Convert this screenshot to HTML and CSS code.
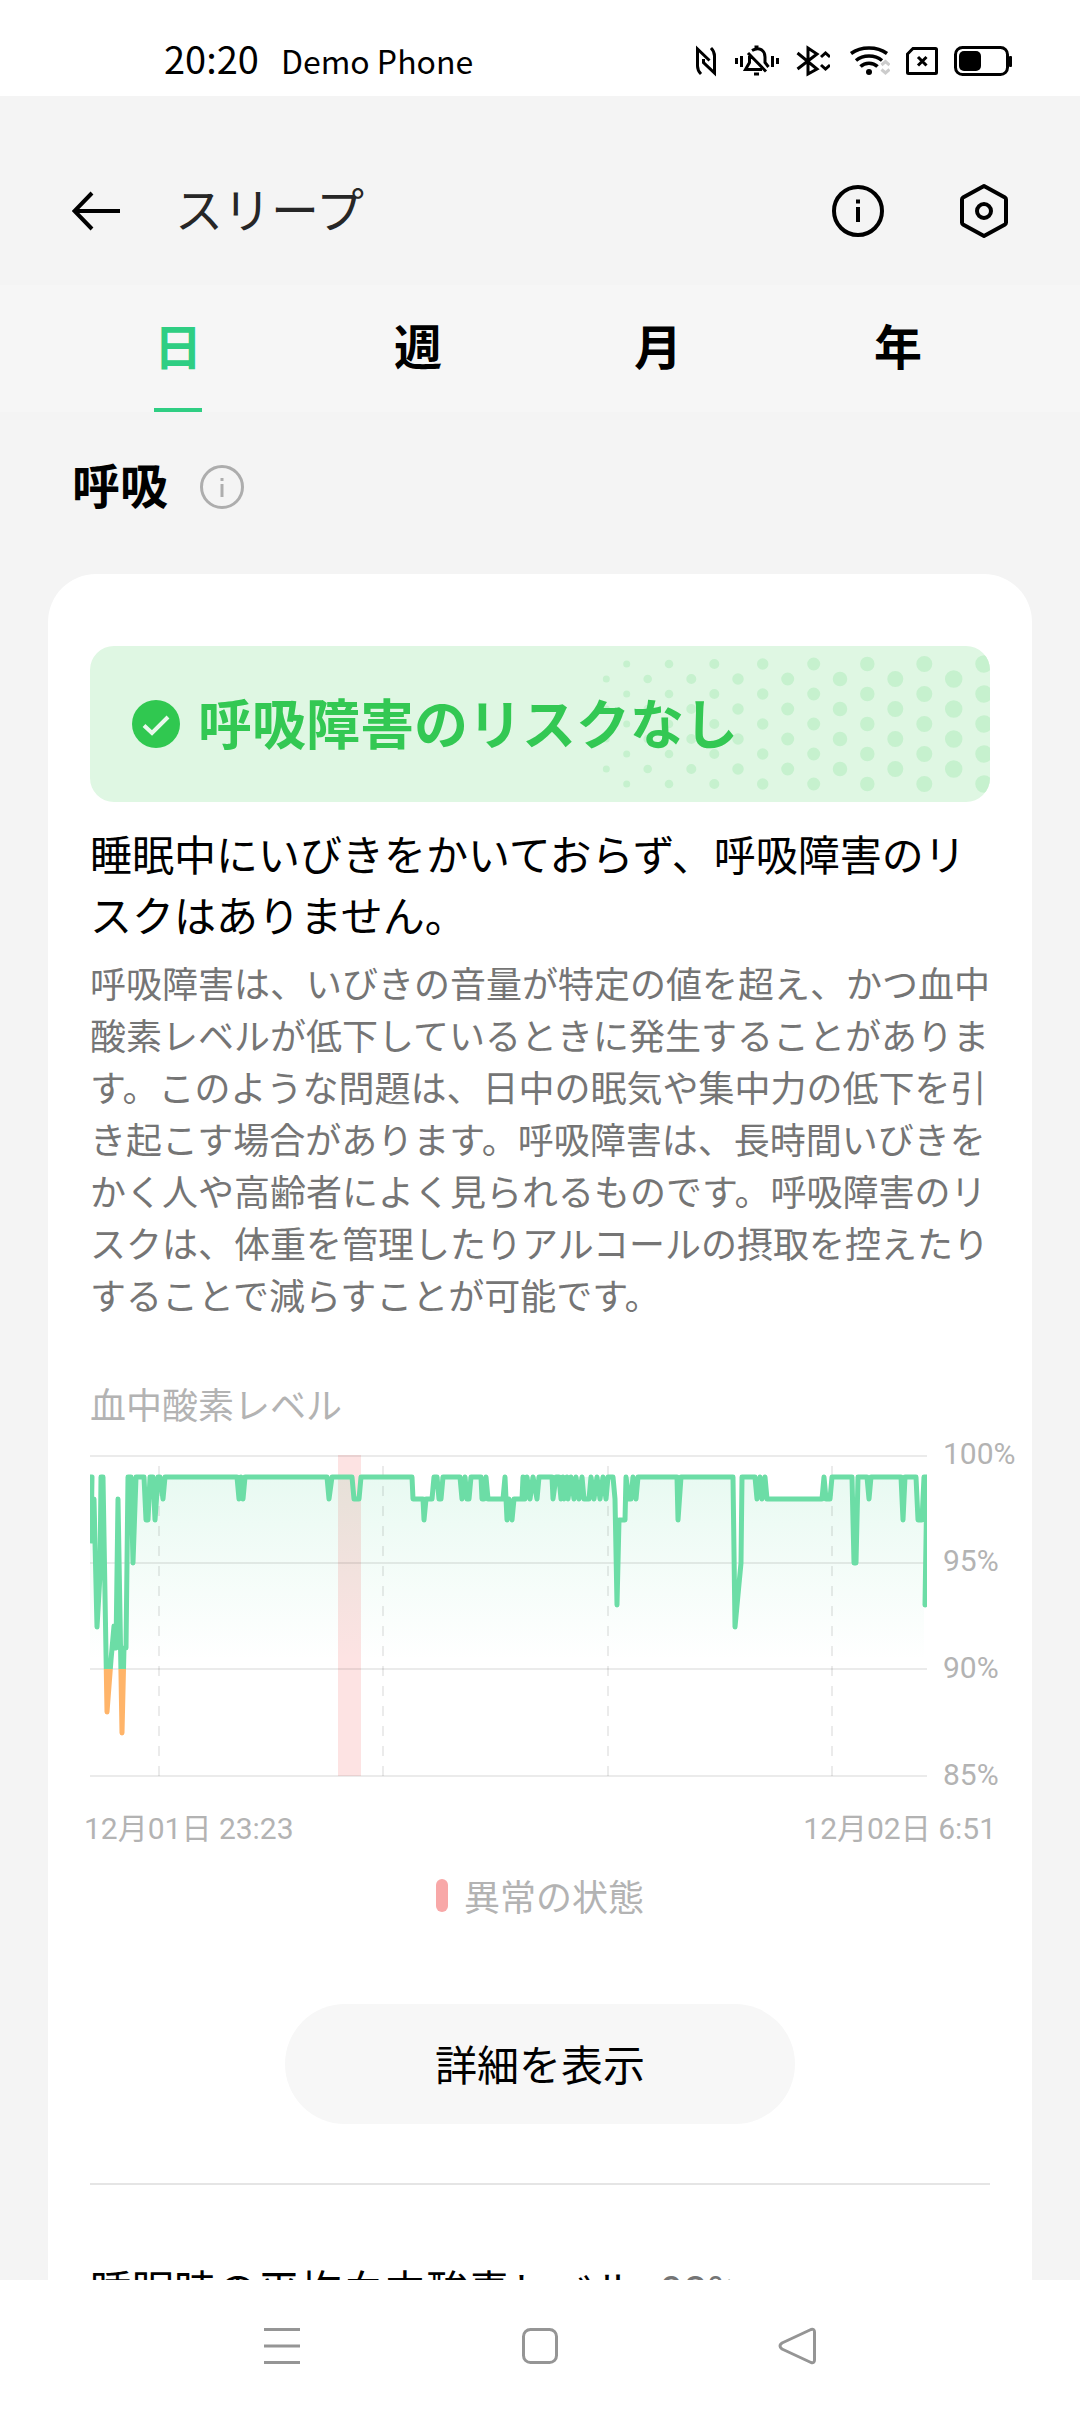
FILE: index.html
```html
<!DOCTYPE html>
<html lang="ja">
<head>
<meta charset="utf-8">
<meta name="viewport" content="width=device-width, initial-scale=1">
<title>スリープ</title>
<link rel="stylesheet" href="styles.css">
</head>
<body>
<div class="status-bar">
  <span class="clock">20:20</span>
  <span class="carrier">Demo Phone</span>
  <div class="status-icons">
    <svg width="24" height="32" viewBox="0 0 24 32" fill="none" stroke="#000" stroke-width="3"><path d="M7 29C4.500 26.500 3.500 24 3.500 21V4L15.500 15.500M17 3C19.500 5.500 20.500 8 20.500 11V28L9.500 17.500V14"/></svg>
    <svg width="46" height="32" viewBox="0 0 46 32" fill="none" stroke="#000" stroke-width="3"><path d="M2.500 13v6M7.500 11v11M38.500 11v11M43.500 13v6M14 8L32 26.500M18 5.500C25 1.500 31 5 31 12V17.500L34.500 22M15.500 11V17.500L11.500 24.500H28M20 29h5M20.500 2h4"/></svg>
    <svg width="34" height="32" viewBox="0 0 34 32" fill="none" stroke="#000" stroke-width="3"><path d="M1.500 8L21 24L12 29V3L21 9L1.500 24M25 12L29.500 8L34 12M25 20L29.500 24L34 20"/></svg>
    <svg width="44" height="32" viewBox="-4 0 44 32" fill="none" stroke="#000" stroke-width="3.500"><path d="M1 8.500C11 1 27 1 37 8.500M6 15.500C13 9.500 25 9.500 32 15.500M10.500 21.500C15 17 23 17 27.500 21.500"/><circle cx="19" cy="27" r="3" fill="#000" stroke="none"/><path stroke="#ccc" stroke-width="3" d="M31.500 20L35.500 16.500L39.500 20M31.500 24.500L35.500 28L39.500 24.500"/></svg>
    <svg width="32" height="32" viewBox="0 0 32 32" fill="none" stroke="#000" stroke-width="3"><path d="M7 3.500H29.500Q30.500 3.500 30.500 4.500V27.500Q30.500 28.500 29.500 28.500H2.500Q1.500 28.500 1.500 27.500V9ZM12 12L20.500 20.500M20.500 12L12 20.500"/></svg>
    <svg width="58" height="32" viewBox="0 0 58 32"><rect x="1.500" y="2.500" width="52" height="27" rx="7" fill="none" stroke="#000" stroke-width="3"/><rect x="5" y="6" width="22" height="20" rx="5"/><rect x="55" y="11" width="3" height="11" rx="1"/></svg>
  </div>
</div>

<header class="app-bar">
  <button class="icon-button" type="button" aria-label="戻る">
    <svg width="48" height="56" viewBox="0 0 48 56" fill="none" stroke="#000" stroke-width="4"><path d="M48 28H3M20 10L2.500 28L20 46"/></svg>
  </button>
  <h1 class="app-title">スリープ</h1>
  <div class="app-actions">
    <button class="icon-button" type="button" aria-label="情報">
      <svg width="56" height="56" viewBox="0 0 56 56"><circle cx="28" cy="28" r="24" fill="none" stroke="#000" stroke-width="4"/><path d="M26 16.500h4v4h-4zM26 24h4v15h-4z"/></svg>
    </button>
    <button class="icon-button" type="button" aria-label="設定">
      <svg width="56" height="56" viewBox="0 0 56 56" fill="none" stroke="#000" stroke-width="4" stroke-linejoin="round"><path d="M28 3L49 14.500Q50 15.300 50 16.500V39.500Q50 40.700 49 41.500L28 53L7 41.500Q6 40.700 6 39.500V16.500Q6 15.300 7 14.500Z"/><circle cx="28" cy="28" r="7"/></svg>
    </button>
  </div>
</header>

<nav class="tabs">
  <a class="tab tab-active" href="#day" aria-current="page">日</a>
  <a class="tab" href="#week">週</a>
  <a class="tab" href="#month">月</a>
  <a class="tab" href="#year">年</a>
</nav>

<main class="content">
  <div class="section-head">
    <h2 class="section-title">呼吸</h2>
    <button class="icon-button" type="button" aria-label="呼吸について">
      <svg width="44" height="44" viewBox="0 0 44 44"><circle cx="22" cy="22" r="20.500" fill="none" stroke="#adadad" stroke-width="3"/><path fill="#adadad" d="M20.500 13h3v3h-3zM20.500 19h3v13h-3z"/></svg>
    </button>
  </div>

  <section class="card">
    <div class="banner">
      <svg class="banner-dots" width="902" height="156" viewBox="0 0 902 156" aria-hidden="true">
        <g stroke="#c6f1ce" stroke-linecap="round">
          <path stroke-width="7" d="M538.700 18v0M538.700 48v0M538.700 78v0M538.700 108v0M538.700 138v0M518.300 33v0M518.300 63v0M518.300 93v0M518.300 123v0"/>
          <path stroke-width="8.600" d="M581 18v0M581 48v0M581 78v0M581 108v0M581 138v0M559.700 33v0M559.700 63v0M559.700 93v0M559.700 123v0"/>
          <path stroke-width="10" d="M626.300 18v0M626.300 48v0M626.300 78v0M626.300 108v0M626.300 138v0M603.300 33v0M603.300 63v0M603.300 93v0M603.300 123v0"/>
          <path stroke-width="11.500" d="M674.700 18v0M674.700 48v0M674.700 78v0M674.700 108v0M674.700 138v0M650 33v0M650 63v0M650 93v0M650 123v0"/>
          <path stroke-width="13" d="M725.700 18v0M725.700 48v0M725.700 78v0M725.700 108v0M725.700 138v0M699.700 33v0M699.700 63v0M699.700 93v0M699.700 123v0"/>
          <path stroke-width="14.500" d="M779.300 18v0M779.300 48v0M779.300 78v0M779.300 108v0M779.300 138v0M752 33v0M752 63v0M752 93v0M752 123v0"/>
          <path stroke-width="16" d="M836.300 18v0M836.300 48v0M836.300 78v0M836.300 108v0M836.300 138v0M807.300 33v0M807.300 63v0M807.300 93v0M807.300 123v0"/>
          <path stroke-width="17.500" d="M896 18v0M896 48v0M896 78v0M896 108v0M896 138v0M865.700 33v0M865.700 63v0M865.700 93v0M865.700 123v0"/>
        </g>
      </svg>
      <svg class="banner-check" width="48" height="48" viewBox="0 0 48 48" aria-hidden="true"><circle cx="24" cy="24" r="24" fill="#30c850"/><path d="M12 25.500L20 33L36 17" fill="none" stroke="#e9f9ec" stroke-width="4"/></svg>
      <strong class="banner-text">呼吸障害のリスクなし</strong>
    </div>

    <p class="lead">睡眠中にいびきをかいておらず、呼吸障害のリスクはありません。</p>
    <p class="description">呼吸障害は、いびきの音量が特定の値を超え、かつ血中酸素レベルが低下しているときに発生することがあります。このような問題は、日中の眠気や集中力の低下を引き起こす場合があります。呼吸障害は、長時間いびきをかく人や高齢者によく見られるものです。呼吸障害のリスクは、体重を管理したりアルコールの摂取を控えたりすることで減らすことが可能です。</p>

    <h3 class="chart-title">血中酸素レベル</h3>
    <div class="chart">
      <svg class="plot" viewBox="0 0 837 322" preserveAspectRatio="none" role="img" aria-label="血中酸素レベルの推移">
        <defs>
          <linearGradient id="line-colour" gradientUnits="userSpaceOnUse" x1="0" y1="0" x2="0" y2="322">
            <stop offset="0.665" stop-color="#6cdda6"/>
            <stop offset="0.665" stop-color="#ffb469"/>
          </linearGradient>
          <linearGradient id="area-colour" gradientUnits="userSpaceOnUse" x1="0" y1="22" x2="0" y2="205">
            <stop offset="0" stop-color="#2fce83" stop-opacity="0.110"/>
            <stop offset="0.450" stop-color="#2fce83" stop-opacity="0.060"/>
            <stop offset="1" stop-color="#2fce83" stop-opacity="0"/>
          </linearGradient>
        </defs>
        <rect x="248" y="0" width="23" height="321" fill="#fde3e3"/>
        <path d="M0 214V22L2 86L4 44L7 172L11 22H14L17 214H21L24 171L25 193L28 44L31 214H33L34 193H36L38 22H41L43 108L46 22H54L56 65H58L60 22H63L65 65L68 22H70L73 44L75 22H147L149 44H153L155 22H237L239 44L242 22H262L264 44H269L271 22H322L324 44H342L344 22H391L393 44H432L434 22H523L527 150L529 65H535L537 22H643L645 172L651 108L652 22H665L667 44H740L742 22H762L764 108H766L767 22H811L813 65L815 22H826L828 65H832L834 22V214Z" fill="url(#area-colour)"/>
        <path d="M0 1H837M0 108H837M0 214H837M0 321H837" stroke="#000" stroke-opacity="0.080" stroke-width="2"/>
        <path d="M69 11V321M293 11V321M518 11V321M742 11V321" stroke="#000" stroke-opacity="0.080" stroke-width="2" stroke-dasharray="10 10"/>
        <path d="M0 22H2L1 86H3L4 44L7 172L10 120L11 22H13L17 257L21 205L24 171L26 193L28 44L32 278L34 193H36L38 22H41L43 108L46 22H54L56 65H58L60 22H63L65 65L68 22H70L73 44L75 22H147L149 44L151 22L153 44L155 22H237L239 44L242 22H262L264 44H269L271 22H322L323 44H333L334 65L336 44H342L344 22H347L349 44H351L353 22H370L372 44L375 22L377 44H379L381 22H391L392 44H394L396 22L398 44H413L415 22L417 65L419 44L422 65L424 44H432L433 22L435 44L437 22L440 44L443 22L447 44L449 22H462L463 44L466 22H469L471 44L473 22L474 44L477 22L478 44L481 22L484 44L486 22L489 44L492 22L494 44H499L501 22L504 44L507 22L510 44L513 22L516 44L518 22H523L525 44L527 150L529 65H535L536 22L539 44H541L543 22L546 44L548 22H587L588 65L591 22H643L645 172L649 129L651 108L652 22H665L667 44L670 22L672 44L675 22L677 44H732L734 22L736 44H740L742 22H762L764 108H766L768 22H777L779 44L781 22H811L813 65L815 22H826L828 65H832L834 22H837L835 150" fill="none" stroke="url(#line-colour)" stroke-width="5" stroke-linejoin="round" stroke-linecap="round"/>
      </svg>
      <div class="y-axis">
        <span>100%</span>
        <span>95%</span>
        <span>90%</span>
        <span>85%</span>
      </div>
    </div>
    <div class="x-axis">
      <span>12月01日 23:23</span>
      <span>12月02日 6:51</span>
    </div>
    <div class="legend"><i class="legend-mark"></i><span>異常の状態</span></div>

    <button class="details-button" type="button">詳細を表示</button>

    <div class="average">
      <span>睡眠時の平均血中酸素レベル</span>
      <span class="average-value">98%</span>
    </div>
  </section>
</main>

<footer class="system-nav">
  <button class="icon-button" type="button" aria-label="アプリ一覧">
    <svg width="40" height="40" viewBox="0 0 40 40"><path d="M2 3.500h36M2 20h36M2 36.500h36" stroke="#959595" stroke-width="3"/></svg>
  </button>
  <button class="icon-button" type="button" aria-label="ホーム">
    <svg width="40" height="40" viewBox="0 0 40 40"><rect x="3.500" y="3.500" width="33" height="33" rx="7" fill="none" stroke="#959595" stroke-width="3"/></svg>
  </button>
  <button class="icon-button" type="button" aria-label="戻る">
    <svg width="40" height="40" viewBox="0 0 40 40"><path d="M4 17L33 3.500Q36.500 2.500 36.500 6V34Q36.500 37.500 33 36.500L4 23Q0 20 4 17Z" fill="none" stroke="#959595" stroke-width="3" stroke-linejoin="round"/></svg>
  </button>
</footer>
</body>
</html>
```
FILE: styles.css
```css
* {
  box-sizing: border-box;
}

body {
  margin: 0;
  height: 100vh;
  display: flex;
  flex-direction: column;
  background: #f4f4f4;
  color: #000;
  font-family: "Noto Sans CJK JP", sans-serif;
}

h1, h2, h3, p {
  margin: 0;
  font-weight: 400;
}

svg {
  display: block;
  flex: none;
}

button {
  border: 0;
  padding: 0;
  background: none;
  color: inherit;
  font: inherit;
}

.status-bar {
  display: flex;
  align-items: baseline;
  flex: none;
  height: 96px;
  padding: 30px 68px 0 164px;
  background: #fff;
  line-height: 56px;
}

.clock {
  font-size: 38px;
}

.carrier {
  margin-left: 22px;
  font-size: 32px;
}

.status-icons {
  display: flex;
  align-self: flex-start;
  align-items: center;
  gap: 16px;
  margin-left: auto;
  padding-top: 15px;
}

.app-bar {
  display: flex;
  align-items: center;
  flex: none;
  height: 189px;
  padding: 41px 68px 0 72px;
}

.app-title {
  margin-left: 55px;
  padding-bottom: 8px;
  font-size: 48px;
  line-height: 72px;
  color: #262626;
}

.app-actions {
  display: flex;
  gap: 70px;
  margin-left: auto;
}

.tabs {
  display: flex;
  flex: none;
  padding: 0 62px 0 58px;
  background: #f6f6f6;
}

.tab {
  display: flex;
  flex: 1;
  flex-direction: column;
  align-items: center;
  padding-top: 23px;
  font-size: 48px;
  font-weight: 700;
  line-height: 72px;
  color: inherit;
  text-decoration: none;
}

.tab::after {
  content: "";
  width: 48px;
  height: 4px;
  margin-top: 28px;
}

.tab-active {
  color: #2fce83;
}

.tab-active::after {
  background: #2fce83;
}

.content {
  flex: 1;
  min-height: 0;
  overflow: hidden auto;
  padding: 0 48px;
  scrollbar-width: none;
}

.section-head {
  display: flex;
  align-items: center;
  gap: 32px;
  padding: 39px 24px 51px;
}

.section-title {
  padding-bottom: 8px;
  font-size: 48px;
  font-weight: 700;
  line-height: 64px;
}

.card {
  padding: 72px 42px 48px;
  border-radius: 48px;
  background: #fff;
}

.banner {
  position: relative;
  display: flex;
  align-items: center;
  gap: 18px;
  height: 156px;
  padding: 0 42px;
  overflow: hidden;
  border-radius: 24px;
  background: #dff7e3;
}

.banner-dots {
  position: absolute;
  top: 0;
  right: 0;
}

.banner-check,
.banner-text {
  position: relative;
}

.banner-text {
  padding-bottom: 4px;
  font-size: 54px;
  font-weight: 700;
  line-height: 80px;
  color: #33c853;
}

.lead {
  margin-top: 20px;
  font-size: 42px;
  line-height: 61px;
}

.description {
  margin-top: 12px;
  font-size: 36px;
  line-height: 52px;
  color: #757575;
}

.chart-title {
  margin-top: 57px;
  font-size: 36px;
  line-height: 52px;
  color: #b3b3b3;
}

.chart {
  display: flex;
  gap: 16px;
  margin: 26px -42px 0 0;
}

.plot {
  flex: 1;
  min-width: 0;
  height: 322px;
}

.y-axis {
  display: flex;
  flex-direction: column;
  justify-content: space-between;
  width: 89px;
  margin: -19px 0 -16px;
  font: 30px/36px Roboto, sans-serif;
  color: #b3b3b3;
}

.x-axis {
  display: flex;
  justify-content: space-between;
  margin: 32px -6px 0;
  font: 30px/40px Roboto, "Noto Sans CJK JP", sans-serif;
  color: #b3b3b3;
}

.legend {
  display: flex;
  align-items: center;
  justify-content: center;
  gap: 16px;
  margin-top: 20px;
  font-size: 36px;
  line-height: 52px;
  color: #b3b3b3;
}

.legend-mark {
  width: 12px;
  height: 33px;
  border-radius: 6px;
  background: #f8a8a8;
}

.details-button {
  display: block;
  width: 510px;
  height: 120px;
  margin: 83px auto 0;
  padding-bottom: 4px;
  border-radius: 60px;
  background: #f7f7f7;
  font-size: 42px;
}

.average {
  display: flex;
  align-items: baseline;
  gap: 24px;
  margin-top: 59px;
  padding-top: 72px;
  border-top: 2px solid #e5e5e5;
  font-size: 42px;
  line-height: 61px;
}

.average-value {
  font-family: Roboto, sans-serif;
  color: #757575;
}

.system-nav {
  display: flex;
  align-items: center;
  justify-content: center;
  gap: 218px;
  flex: none;
  height: 132px;
  background: #fff;
}
```
